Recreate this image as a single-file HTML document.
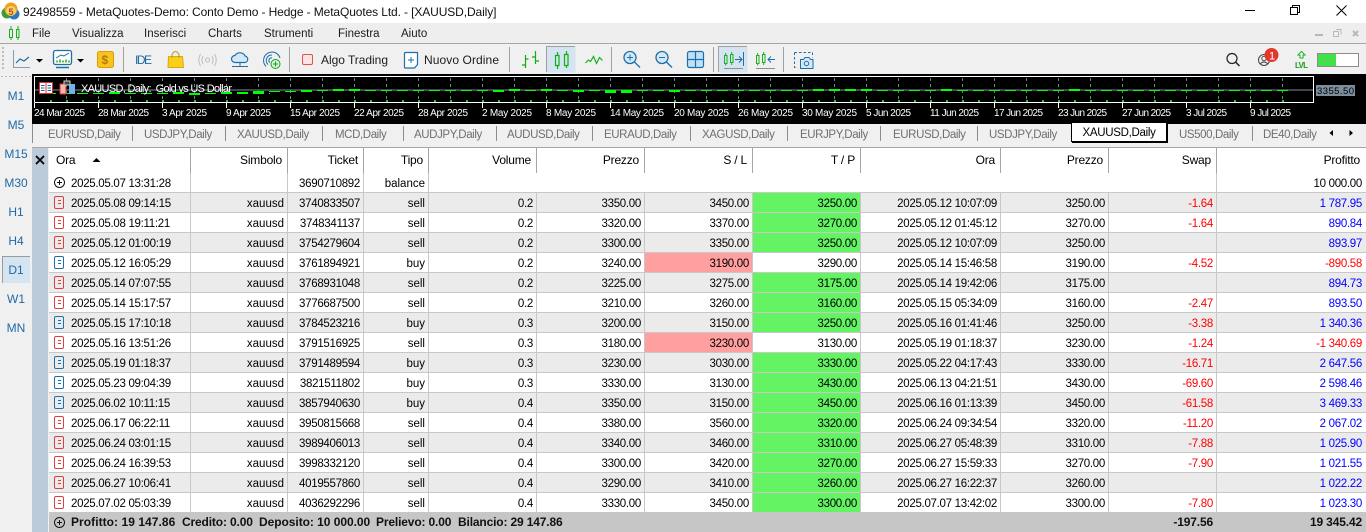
<!DOCTYPE html>
<html><head><meta charset="utf-8"><style>
html,body{margin:0;padding:0;width:1366px;height:532px;overflow:hidden;background:#f0f0f0;font-family:"Liberation Sans",sans-serif;color:#000}
.abs,.t,.m,.side,.tab{position:absolute}
#title{left:0;top:0;width:1366px;height:23px;background:#fff}
.t{left:23px;top:4px;font-size:12px;line-height:17px;white-space:nowrap;color:#111;letter-spacing:-.11px}
#menu{left:0;top:23px;width:1366px;height:20px;background:#eee}
#mline{left:0;top:43px;width:1366px;height:1px;background:#a6a6a6}
.m{top:27px;font-size:11.5px;line-height:14px;color:#1c1c1c;white-space:nowrap}
.side{left:2px;width:28px;text-align:center;font-size:12px;line-height:16px;color:#1e6aa8}
#d1{left:2px;top:256px;width:27px;height:26px;background:#d5e4f1;border-top:1px solid #9a9a9a;border-left:1px solid #9a9a9a}
.tab{top:128px;font-size:11.5px;letter-spacing:-.4px;line-height:15px;color:#6f6f6f;white-space:nowrap}
.sep{position:absolute;top:126px;width:1px;height:15px;background:#8c8c8c}
#active{left:1071px;top:122px;width:94px;height:18px;background:#fff;border:1px solid #000;box-shadow:1px 1px 0 #000;text-align:center;font-size:11.5px;letter-spacing:-.3px;line-height:21px;color:#000}
#hline{left:32px;top:147px;width:1334px;height:1px;background:#a6a6a6}
#strip{left:32px;top:148px;width:16px;height:384px;background:#bccbda}
table{position:absolute;left:49px;top:148px;width:1317px;border-collapse:separate;border-spacing:0;table-layout:fixed;background:#fff;font-size:11.5px;letter-spacing:-.3px}
td,th{box-sizing:border-box;height:20px;padding:3px 3px 0 0;line-height:16px;text-align:right;font-weight:normal;border-right:1px solid #c8c8c8;border-bottom:1px solid #c8c8c8;white-space:nowrap;overflow:hidden;color:#000}
th{height:25px;padding:0 5px 0 0;border-bottom:0;border-right:1px solid #a6a6a6;font-size:12px;letter-spacing:-.2px;line-height:25px;vertical-align:top}
tr.g td{background:#ebebeb}
td:nth-child(2),td:nth-child(4){letter-spacing:0}
td:last-child{border-right:0;padding-right:4px}
th:last-child{border-right:0;padding-right:6px}
td:first-child{text-align:left;padding-left:22px;position:relative}
th:first-child{text-align:left;padding-left:7px}
i{position:absolute;left:5px;top:3px;width:8px;height:11px;border:1.5px solid #d8413f;border-radius:2px}
i:before,i:after{content:"";position:absolute;left:2.5px;width:3px;height:1px;background:#d8413f}
i:before{top:3px}i:after{top:6px}
i.b{border-color:#1e6ea8}i.b:before,i.b:after{background:#1e6ea8}
td.tp{background:#63f363!important}
td.sl{background:#ff9f9f!important}
td.r{color:#f00}
td.u{color:#00f}
#foot{left:49px;top:512px;width:1317px;height:20px;background:#c6c6c6}
.f{position:absolute;top:515px;font-size:12px;line-height:15px;font-weight:bold;letter-spacing:-.15px;color:#111;white-space:nowrap}
svg{position:absolute;left:0;top:0}
</style></head><body>
<div class="abs" id="title"></div>
<div class="t">92498559 - MetaQuotes-Demo: Conto Demo - Hedge - MetaQuotes Ltd. - [XAUUSD,Daily]</div>
<div class="abs" id="menu"></div><div class="abs" id="mline"></div>
<div class="m" style="left:32px">File</div><div class="m" style="left:72px">Visualizza</div><div class="m" style="left:144px">Inserisci</div><div class="m" style="left:208px">Charts</div><div class="m" style="left:264px">Strumenti</div><div class="m" style="left:338px">Finestra</div><div class="m" style="left:401px">Aiuto</div>

<div class="abs" style="left:32px;top:74px;width:1334px;height:50px;background:#000"></div>

<div class="abs" id="d1"></div>
<div class="side" style="top:88px">M1</div><div class="side" style="top:117px">M5</div><div class="side" style="top:146px">M15</div><div class="side" style="top:175px">M30</div><div class="side" style="top:204px">H1</div><div class="side" style="top:233px">H4</div><div class="side" style="top:262px">D1</div><div class="side" style="top:291px">W1</div><div class="side" style="top:320px">MN</div>

<div class="sep" style="left:32px;top:124px;height:19px"></div>
<div class="tab" style="left:48px">EURUSD,Daily</div><div class="sep" style="left:132px"></div>
<div class="tab" style="left:144px">USDJPY,Daily</div><div class="sep" style="left:225px"></div>
<div class="tab" style="left:237px">XAUUSD,Daily</div><div class="sep" style="left:322px"></div>
<div class="tab" style="left:335px">MCD,Daily</div><div class="sep" style="left:403px"></div>
<div class="tab" style="left:414px">AUDJPY,Daily</div><div class="sep" style="left:496px"></div>
<div class="tab" style="left:507px">AUDUSD,Daily</div><div class="sep" style="left:592px"></div>
<div class="tab" style="left:604px">EURAUD,Daily</div><div class="sep" style="left:690px"></div>
<div class="tab" style="left:702px">XAGUSD,Daily</div><div class="sep" style="left:787px"></div>
<div class="tab" style="left:800px">EURJPY,Daily</div><div class="sep" style="left:880px"></div>
<div class="tab" style="left:893px">EURUSD,Daily</div><div class="sep" style="left:977px"></div>
<div class="tab" style="left:989px">USDJPY,Daily</div>
<div class="abs" id="active">XAUUSD,Daily</div>
<div class="tab" style="left:1179px">US500,Daily</div><div class="sep" style="left:1252px"></div>
<div class="tab" style="left:1263px;width:54px;overflow:hidden">DE40,Daily</div>

<div class="abs" id="hline"></div>
<div class="abs" id="strip"></div>

<table>
<colgroup><col style="width:142px"><col style="width:97px"><col style="width:76px"><col style="width:65px"><col style="width:108px"><col style="width:108px"><col style="width:108px"><col style="width:108px"><col style="width:140px"><col style="width:108px"><col style="width:108px"><col></colgroup>
<tr><th>Ora</th><th>Simbolo</th><th>Ticket</th><th>Tipo</th><th>Volume</th><th>Prezzo</th><th>S / L</th><th>T / P</th><th>Ora</th><th>Prezzo</th><th>Swap</th><th>Profitto</th></tr>
<tr><td>2025.05.07 13:31:28</td><td></td><td>3690710892</td><td>balance</td><td colspan="7"></td><td>10 000.00</td></tr>
<tr class="g"><td><i></i>2025.05.08 09:14:15</td><td>xauusd</td><td>3740833507</td><td>sell</td><td>0.2</td><td>3350.00</td><td>3450.00</td><td class="tp">3250.00</td><td>2025.05.12 10:07:09</td><td>3250.00</td><td class="r">-1.64</td><td class="u">1 787.95</td></tr>
<tr><td><i></i>2025.05.08 19:11:21</td><td>xauusd</td><td>3748341137</td><td>sell</td><td>0.2</td><td>3320.00</td><td>3370.00</td><td class="tp">3270.00</td><td>2025.05.12 01:45:12</td><td>3270.00</td><td class="r">-1.64</td><td class="u">890.84</td></tr>
<tr class="g"><td><i></i>2025.05.12 01:00:19</td><td>xauusd</td><td>3754279604</td><td>sell</td><td>0.2</td><td>3300.00</td><td>3350.00</td><td class="tp">3250.00</td><td>2025.05.12 10:07:09</td><td>3250.00</td><td></td><td class="u">893.97</td></tr>
<tr><td><i class="b"></i>2025.05.12 16:05:29</td><td>xauusd</td><td>3761894921</td><td>buy</td><td>0.2</td><td>3240.00</td><td class="sl">3190.00</td><td>3290.00</td><td>2025.05.14 15:46:58</td><td>3190.00</td><td class="r">-4.52</td><td class="r">-890.58</td></tr>
<tr class="g"><td><i></i>2025.05.14 07:07:55</td><td>xauusd</td><td>3768931048</td><td>sell</td><td>0.2</td><td>3225.00</td><td>3275.00</td><td class="tp">3175.00</td><td>2025.05.14 19:42:06</td><td>3175.00</td><td></td><td class="u">894.73</td></tr>
<tr><td><i></i>2025.05.14 15:17:57</td><td>xauusd</td><td>3776687500</td><td>sell</td><td>0.2</td><td>3210.00</td><td>3260.00</td><td class="tp">3160.00</td><td>2025.05.15 05:34:09</td><td>3160.00</td><td class="r">-2.47</td><td class="u">893.50</td></tr>
<tr class="g"><td><i class="b"></i>2025.05.15 17:10:18</td><td>xauusd</td><td>3784523216</td><td>buy</td><td>0.3</td><td>3200.00</td><td>3150.00</td><td class="tp">3250.00</td><td>2025.05.16 01:41:46</td><td>3250.00</td><td class="r">-3.38</td><td class="u">1 340.36</td></tr>
<tr><td><i></i>2025.05.16 13:51:26</td><td>xauusd</td><td>3791516925</td><td>sell</td><td>0.3</td><td>3180.00</td><td class="sl">3230.00</td><td>3130.00</td><td>2025.05.19 01:18:37</td><td>3230.00</td><td class="r">-1.24</td><td class="r">-1 340.69</td></tr>
<tr class="g"><td><i class="b"></i>2025.05.19 01:18:37</td><td>xauusd</td><td>3791489594</td><td>buy</td><td>0.3</td><td>3230.00</td><td>3030.00</td><td class="tp">3330.00</td><td>2025.05.22 04:17:43</td><td>3330.00</td><td class="r">-16.71</td><td class="u">2 647.56</td></tr>
<tr><td><i class="b"></i>2025.05.23 09:04:39</td><td>xauusd</td><td>3821511802</td><td>buy</td><td>0.3</td><td>3330.00</td><td>3130.00</td><td class="tp">3430.00</td><td>2025.06.13 04:21:51</td><td>3430.00</td><td class="r">-69.60</td><td class="u">2 598.46</td></tr>
<tr class="g"><td><i class="b"></i>2025.06.02 10:11:15</td><td>xauusd</td><td>3857940630</td><td>buy</td><td>0.4</td><td>3350.00</td><td>3150.00</td><td class="tp">3450.00</td><td>2025.06.16 01:13:39</td><td>3450.00</td><td class="r">-61.58</td><td class="u">3 469.33</td></tr>
<tr><td><i></i>2025.06.17 06:22:11</td><td>xauusd</td><td>3950815668</td><td>sell</td><td>0.4</td><td>3380.00</td><td>3560.00</td><td class="tp">3320.00</td><td>2025.06.24 09:34:54</td><td>3320.00</td><td class="r">-11.20</td><td class="u">2 067.02</td></tr>
<tr class="g"><td><i></i>2025.06.24 03:01:15</td><td>xauusd</td><td>3989406013</td><td>sell</td><td>0.4</td><td>3340.00</td><td>3460.00</td><td class="tp">3310.00</td><td>2025.06.27 05:48:39</td><td>3310.00</td><td class="r">-7.88</td><td class="u">1 025.90</td></tr>
<tr><td><i></i>2025.06.24 16:39:53</td><td>xauusd</td><td>3998332120</td><td>sell</td><td>0.4</td><td>3300.00</td><td>3420.00</td><td class="tp">3270.00</td><td>2025.06.27 15:59:33</td><td>3270.00</td><td class="r">-7.90</td><td class="u">1 021.55</td></tr>
<tr class="g"><td><i></i>2025.06.27 10:06:41</td><td>xauusd</td><td>4019557860</td><td>sell</td><td>0.4</td><td>3290.00</td><td>3410.00</td><td class="tp">3260.00</td><td>2025.06.27 16:22:37</td><td>3260.00</td><td></td><td class="u">1 022.22</td></tr>
<tr><td><i></i>2025.07.02 05:03:39</td><td>xauusd</td><td>4036292296</td><td>sell</td><td>0.4</td><td>3330.00</td><td>3450.00</td><td class="tp">3300.00</td><td>2025.07.07 13:42:02</td><td>3300.00</td><td class="r">-7.80</td><td class="u">1 023.30</td></tr>
</table>

<div class="abs" id="foot"></div>
<div class="f" style="left:71px;letter-spacing:.05px">Profitto: 19 147.86</div><div class="f" style="left:182px">Credito: 0.00</div><div class="f" style="left:259px;letter-spacing:-.05px">Deposito: 10 000.00</div><div class="f" style="left:376px">Prelievo: 0.00</div><div class="f" style="left:458px">Bilancio: 29 147.86</div>
<div class="f" style="right:153px">-197.56</div><div class="f" style="right:4px">19 345.42</div>

<svg width="1366" height="532" viewBox="0 0 1366 532" fill="none">
<defs>
<pattern id="vg" patternUnits="userSpaceOnUse" x="66" y="78" width="32" height="6"><rect width="1" height="3" fill="#6d8296"/></pattern>
<pattern id="dt" patternUnits="userSpaceOnUse" x="50" y="100" width="16" height="3"><rect width="2" height="2" fill="#16d316"/></pattern>
<pattern id="tk" patternUnits="userSpaceOnUse" x="34" y="103" width="64" height="5"><rect width="1" height="5" fill="#fff"/></pattern>
</defs>
<!-- title logo -->
<circle cx="7" cy="13" r="5.5" fill="#3f9a3c"/><circle cx="14" cy="14" r="5.5" fill="#2f78c0"/><circle cx="11" cy="9" r="6.5" fill="#f0a020"/><circle cx="11" cy="11" r="5" fill="#f7d26a"/>
<text x="8.5" y="15" font-family="Liberation Sans" font-size="9" font-weight="bold" fill="#b05010">5</text>
<!-- window controls -->
<path d="M1245 10.5h10" stroke="#000"/>
<path d="M1290.5 7.5h7v7h-7zM1292.5 7V5.5h7v7h-1.5" stroke="#000"/>
<path d="M1336.5 5.5l10 10M1346.5 5.5l-10 10" stroke="#000"/>
<!-- menu icon -->
<path d="M9.5 29.5h3v8h-3zM16.5 29.5h2.5v8h-2.5zM11 26v3M11 37v3M18 26v3M18 37v3" stroke="#17b11b"/>
<!-- mdi -->
<path d="M1315 35h8" stroke="#b8b8b8" stroke-width="2"/>
<path d="M1333.5 31.5h5v5h-5zM1336 29.5h5v5" stroke="#b8b8b8"/>
<path d="M1353 31l5 5M1358 31l-5 5" stroke="#b8b8b8" stroke-width="2"/>
<!-- grips -->
<path d="M3 47v24" stroke="#bbb" stroke-dasharray="2 2" stroke-width="2"/>
<path d="M1 76.5h30" stroke="#bbb" stroke-dasharray="2 2"/>
<!-- separators -->
<path d="M123.5 47v25M289.5 47v25M509.5 47v25M611.5 47v25M713.5 47v25M783.5 47v25" stroke="#a0a0a0"/>
<!-- active buttons -->
<rect x="546.5" y="46.5" width="29" height="26" fill="#d5e4f1"/><path d="M546.5 72V46.5H575" stroke="#a0a0a0"/>
<rect x="718.5" y="46.5" width="29" height="26" fill="#d5e4f1"/><path d="M718.5 72V46.5H747" stroke="#a0a0a0"/>
<!-- line chart -->
<path d="M13.5 50v17.5H30" stroke="#8a9bab"/><path d="M16 63l4-4 4 2 5-4" stroke="#1e6ea8" stroke-width="1.2"/>
<path d="M36 59h7l-3.5 3.5z" fill="#000"/>
<!-- monitor -->
<rect x="53.5" y="50.5" width="18" height="14" rx="2" stroke="#1e6ea8" stroke-width="1.3" fill="#fff"/><path d="M56 67.5h13" stroke="#1e6ea8" stroke-width="1.5"/>
<path d="M56 58l5-3 3 1 5-3" stroke="#1e6ea8"/><path d="M57 62.5v-2M60 62.5v-3M63 62.5v-2M66 62.5v-3M69 62.5v-2" stroke="#17b11b" stroke-width="1.5"/>
<path d="M77 59h7l-3.5 3.5z" fill="#000"/>
<!-- dollar -->
<rect x="97.5" y="51.5" width="16" height="16" rx="2" fill="#f6c41c" stroke="#dd9b0a"/>
<text x="101.5" y="64" font-family="Liberation Sans" font-size="12" font-weight="bold" fill="#b8770a">$</text>
<text x="135" y="64" font-family="Liberation Sans" font-size="12" fill="#1e6aa8" textLength="17">IDE</text>
<!-- bag -->
<path d="M168.5 56.5h14l1 11h-15.500z" fill="#f8cf1a" stroke="#e0a510"/><path d="M172 58v-3.5q3.5-6 7 0V58" stroke="#c99410"/>
<!-- signal -->
<circle cx="207.5" cy="60" r="2" stroke="#bdbdbd"/><path d="M203 56q-2 4 0 8M212 56q2 4 0 8M200.5 54q-3.5 6 0 12M214.5 54q3.5 6 0 12" stroke="#bdbdbd"/>
<!-- cloud -->
<path d="M235 62.5a3.5 3.5 0 0 1 0-7 5.5 5 0 0 1 10 .5 3.3 3.3 0 0 1 0 6.5z" fill="#d5e8f7" stroke="#1e6ea8" stroke-width="1.2"/><path d="M240 63v3M232 66.5h16" stroke="#1e6ea8"/>
<!-- target plus -->
<path d="M272 52a8.5 8.5 0 0 0-6 14.5M272 55a5.5 5.5 0 0 0-4 9.5M272 58a2.5 2.5 0 0 0-2 4.5M272 52a8.5 8.5 0 0 1 8 6" stroke="#1e6ea8"/>
<circle cx="275.5" cy="64" r="4.5" fill="#d8f5d8" stroke="#17a11b"/><path d="M273 64h5M275.5 61.5v5" stroke="#17a11b"/>
<!-- algo -->
<rect x="302.5" y="54.5" width="10" height="10" rx="1.5" fill="#fde4e4" stroke="#e0524e"/>
<text x="321" y="64" font-family="Liberation Sans" font-size="12" fill="#1c1c1c" textLength="67">Algo Trading</text>
<!-- nuovo -->
<path d="M404.5 53.5a1 1 0 0 1 1-1H417.5v12l-3 3.5h-9a1 1 0 0 1-1-1z" fill="#fff" stroke="#1e6ea8" stroke-width="1.2"/><path d="M411 57v6M408 60h6" stroke="#1e6ea8"/>
<text x="424" y="64" font-family="Liberation Sans" font-size="12" fill="#1c1c1c" textLength="75">Nuovo Ordine</text>
<!-- bars -->
<path d="M525.5 55v13M522 65h3.5M525.5 59h3M535.5 51v13M532 57h3.5M535.5 61h3.5" stroke="#0fae14" stroke-width="1.2"/>
<!-- candles -->
<path d="M555.5 55.5h3.5v10h-3.5zM564.5 54.5h3.5v11h-3.5zM557.5 52v3M557.5 66v3M566.5 51v3M566.5 66v2" stroke="#0fae14" stroke-width="1.2"/>
<!-- line -->
<path d="M585.5 63l3-3 2 1.5 3-5 3 7 3-6 3 3" stroke="#17b11b" stroke-width="1.2"/>
<!-- zoom -->
<circle cx="630" cy="57.5" r="6" fill="#d5e8f7" stroke="#1e6ea8" stroke-width="1.3"/><path d="M634.5 62l5.5 5.5" stroke="#1e6ea8" stroke-width="1.3"/><path d="M627 57.5h6M630 54.5v6" stroke="#1e6ea8"/>
<circle cx="662" cy="57.5" r="6" fill="#d5e8f7" stroke="#1e6ea8" stroke-width="1.3"/><path d="M666.5 62l5.5 5.5" stroke="#1e6ea8" stroke-width="1.3"/><path d="M659 57.5h6" stroke="#1e6ea8"/>
<!-- grid -->
<rect x="687.5" y="51.5" width="16" height="16" rx="2" fill="#bfe0f7" stroke="#1e6ea8" stroke-width="1.2"/><path d="M695.5 52v15M688 59.5h15" stroke="#1e6ea8" stroke-width="1.2"/>
<!-- scroll -->
<path d="M724.5 55.5h2.5v8h-2.5zM730.5 54.5h2.5v8h-2.5zM725.7 53v2.5M725.7 63.5v2M731.7 52v2.5M731.7 62.5v2.5" stroke="#17b11b"/>
<path d="M735 59.5h7M739 56.5l3 3-3 3" stroke="#1e6ea8"/><path d="M743.5 52v14" stroke="#1e6ea8"/><path d="M724 68.5h19" stroke="#909090"/>
<path d="M756.5 55.5h2.5v8h-2.5zM762.5 54.5h2.5v8h-2.5zM757.7 53v2.5M757.7 63.5v2M763.7 52v2.5M763.7 62.5v2.5" stroke="#17b11b"/>
<path d="M768 59.5h7M771 56.5l-3 3 3 3" stroke="#1e6ea8"/><path d="M756 68.5h19" stroke="#909090"/>
<!-- camera -->
<path d="M794.5 52.5h18v5M794.5 52.5v15h3" stroke="#1e6ea8" stroke-dasharray="2.5 2"/>
<path d="M800.5 59.5h3l1.5-2h4l1.5 2h2.5v9h-12.5z" fill="#d5e8f7" stroke="#1e6ea8"/><circle cx="806.5" cy="63.5" r="2.2" stroke="#1e6ea8"/>
<!-- search -->
<circle cx="1232" cy="58.5" r="5" stroke="#222" stroke-width="1.2"/><path d="M1235.5 62l4 4" stroke="#222" stroke-width="1.5"/>
<!-- user & badge -->
<circle cx="1264" cy="60" r="5.5" stroke="#444"/><circle cx="1264" cy="58.5" r="2.2" stroke="#444"/><path d="M1260 64q4-4 8 0" stroke="#444"/>
<circle cx="1271.5" cy="55" r="7" fill="#e0392b"/>
<text x="1269" y="59.5" font-family="Liberation Sans" font-size="11" fill="#fff">1</text>
<!-- LVL -->
<path d="M1301.5 51.5l-3.5 3.5h2v3h3v-3h2z" fill="#fff" stroke="#17b11b"/>
<text x="1295" y="68" font-family="Liberation Sans" font-size="8" font-weight="bold" fill="#17a11b" textLength="13">LVL</text>
<!-- level bar -->
<rect x="1317.5" y="53.5" width="41" height="13" fill="#fff" stroke="#8c8c8c"/><rect x="1318" y="54" width="18" height="12" fill="#43e047"/>
<!-- chart -->
<rect x="34" y="78" width="1280" height="24" fill="url(#vg)"/>
<path d="M34.5 90H1313" stroke="#7b8a99"/>
<path d="M45 93.5h225" stroke="#0f0" stroke-dasharray="11 5"/>
<path d="M269 91.5h48" stroke="#0f0" stroke-dasharray="11 5"/>
<path d="M317 90.5H1290" stroke="#0f0" stroke-dasharray="11 5"/>
<path stroke="#0f0" stroke-width="2" d="M109 93h11M173 93h11M189 94h11M221 93h11M237 93h11M253 92h11M301 91h11M333 90h11M349 90h11M493 91h11M509 90h11M541 90h11M573 91h11M605 92h11M621 92h11M669 91h11M813 90h11M829 90h11M845 90h11M861 90h11M941 90h11M1069 90h11"/>
<path d="M34.5 102.5V76.5H1313.5V102.5H34.5" stroke="#fff"/>
<rect x="50" y="100" width="1122" height="2" fill="url(#dt)"/>
<rect x="1218" y="100" width="66" height="2" fill="url(#dt)"/>
<rect x="34" y="103" width="1218" height="5" fill="url(#tk)"/>
<rect x="1316" y="85" width="39" height="11" fill="#7c8d9c"/>
<text x="1317" y="94" font-family="Liberation Sans" font-size="9.5" fill="#000" textLength="37">3355.50</text>
<!-- chart overlay icons -->
<rect x="39.5" y="82.5" width="13" height="11" fill="#fff" stroke="#d8302c"/><path d="M46 83v10" stroke="#d8302c"/><path d="M41 85.5h3.5M41 88h3.5M41 90.5h3.5M47.5 85.5h3.5M47.5 88h3.5M47.5 90.5h3.5" stroke="#1e5fa8"/>
<rect x="60" y="84" width="6" height="10" fill="#f6b6b0" stroke="#d8302c"/><rect x="69" y="84" width="6" height="10" fill="#6db5e8"/><rect x="64" y="81" width="6" height="4" fill="#444" stroke="#ccc"/>
<text x="81" y="92" font-family="Liberation Sans" font-size="11" fill="#fff" textLength="151" xml:space="preserve">XAUUSD, Daily:  Gold vs US Dollar</text>
<g font-family="Liberation Sans" font-size="10" fill="#fff">
<text x="34" y="116" textLength="51">24 Mar 2025</text><text x="98" y="116" textLength="51">28 Mar 2025</text><text x="162" y="116" textLength="45">3 Apr 2025</text><text x="226" y="116" textLength="45">9 Apr 2025</text><text x="290" y="116" textLength="50">15 Apr 2025</text><text x="354" y="116" textLength="50">22 Apr 2025</text><text x="418" y="116" textLength="50">28 Apr 2025</text><text x="482" y="116" textLength="50">2 May 2025</text><text x="546" y="116" textLength="50">8 May 2025</text><text x="610" y="116" textLength="54">14 May 2025</text><text x="674" y="116" textLength="55">20 May 2025</text><text x="738" y="116" textLength="55">26 May 2025</text><text x="802" y="116" textLength="55">30 May 2025</text><text x="866" y="116" textLength="45">5 Jun 2025</text><text x="930" y="116" textLength="49">11 Jun 2025</text><text x="994" y="116" textLength="49">17 Jun 2025</text><text x="1058" y="116" textLength="49">23 Jun 2025</text><text x="1122" y="116" textLength="49">27 Jun 2025</text><text x="1186" y="116" textLength="41">3 Jul 2025</text><text x="1250" y="116" textLength="41">9 Jul 2025</text>
</g>
<!-- tab arrows -->
<path d="M1333 130v6l-3.5-3zM1349.5 130v6l3.5-3z" fill="#000"/>
<!-- close X -->
<path d="M36 156l8 8M44 156l-8 8" stroke="#000" stroke-width="1.8"/>
<!-- sort arrow -->
<path d="M92.5 162h8l-4-4z" fill="#000"/>
<!-- plus circles -->
<circle cx="59.5" cy="182.5" r="5" stroke="#111"/><path d="M57 182.5h5M59.5 180v5" stroke="#111"/>
<circle cx="59.5" cy="522.5" r="5" stroke="#111"/><path d="M57 522.5h5M59.5 520v5" stroke="#111"/>
</svg>
</body></html>
